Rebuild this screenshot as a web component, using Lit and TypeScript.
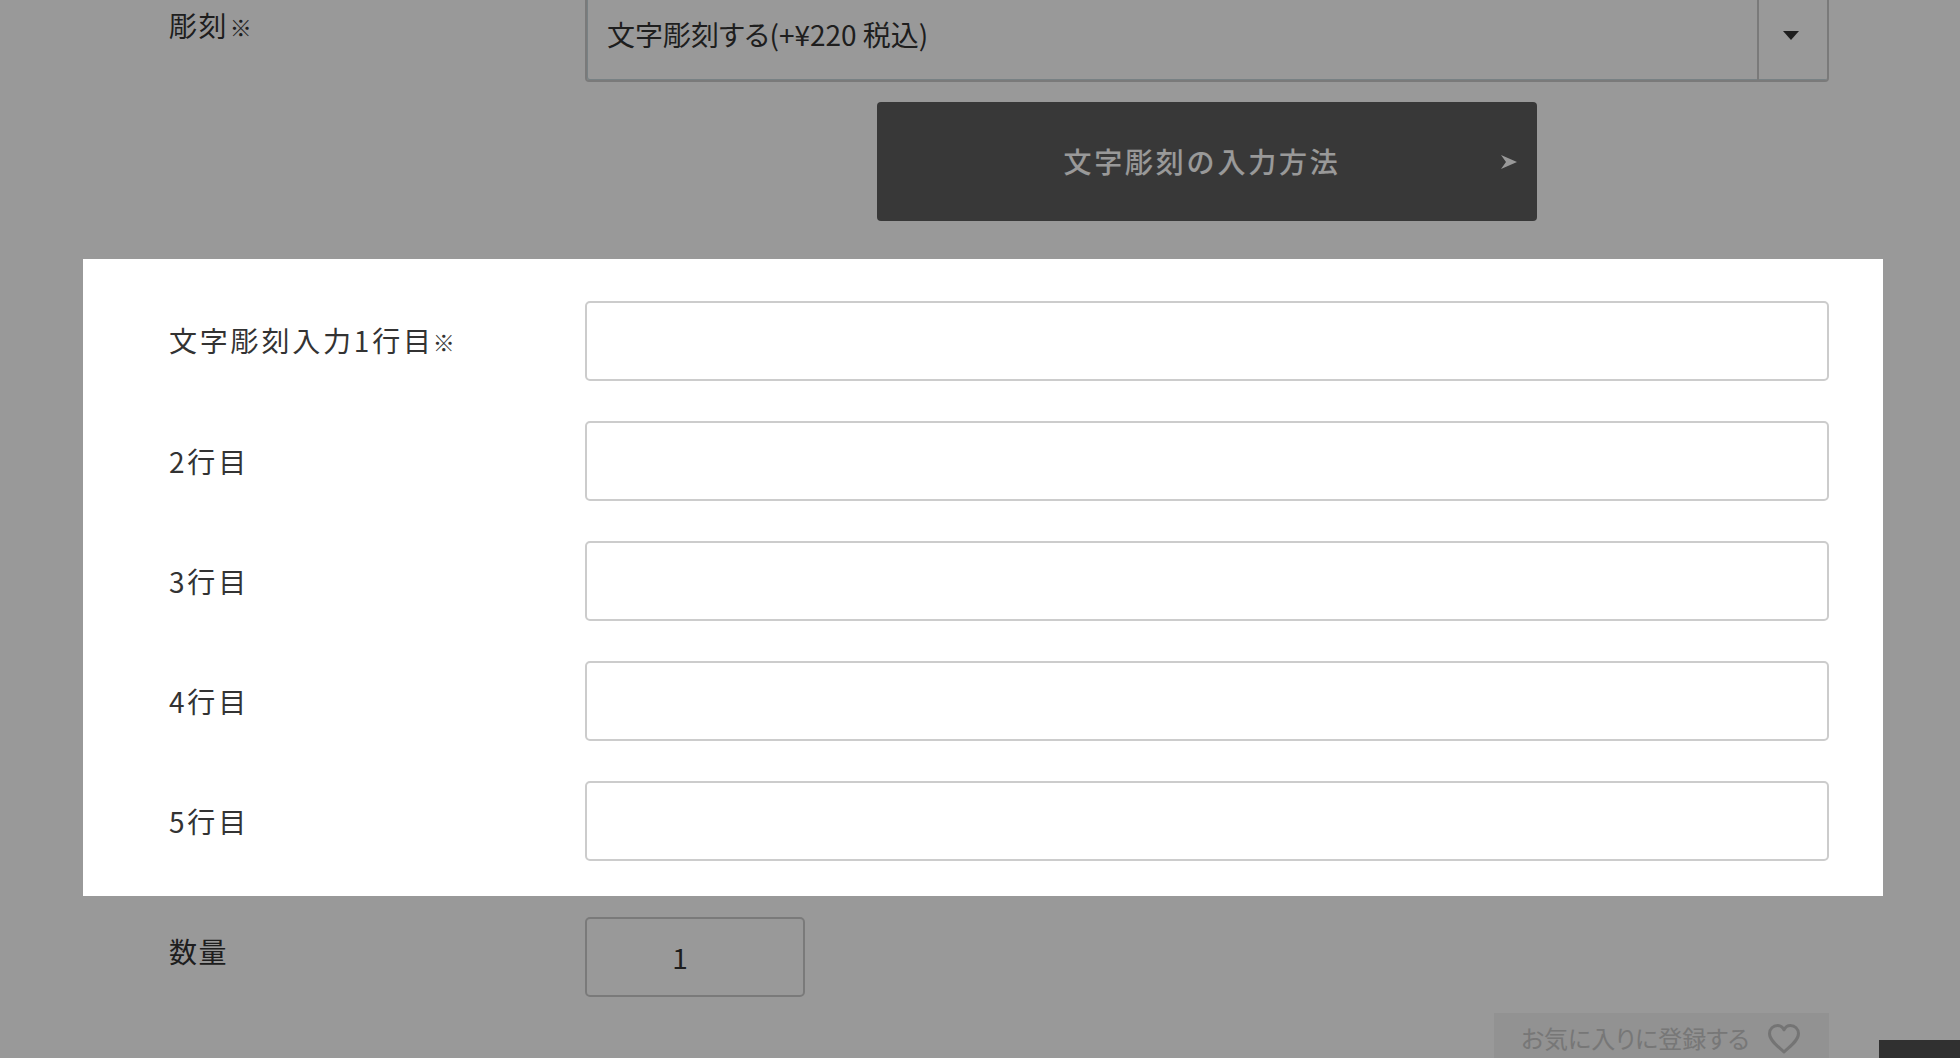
import { LitElement, html, css } from "lit";
import { customElement } from "lit/decorators.js";

@customElement("app-root")
export class AppRoot extends LitElement {
  static styles = css`
    :host {
      display: block;
      font-family: "Noto Sans CJK JP", "Noto Sans", sans-serif;
      color: #333;
    }
    * { box-sizing: border-box; }
    .page {
      position: relative;
      height: 1058px;
      overflow: hidden;
      background: #fff;
    }
    .overlay {
      position: absolute;
      inset: 0;
      z-index: 1;
      background: rgba(0, 0, 0, 0.4);
    }
    .content {
      width: 1800px;
      margin: -11px 0 0 83px;
    }
    .row {
      display: grid;
      grid-template-columns: 416px 1fr;
      padding: 0 54px 0 86px;
      align-items: start;
    }
    .label {
      font-size: 28px;
      line-height: 40px;
      letter-spacing: 1.4px;
    }
    .panel .label {
      letter-spacing: 2.8px;
      font-feature-settings: "palt";
      padding-bottom: 1px;
    }
    .note {
      font-size: 22px;
      letter-spacing: 0;
      margin-left: 2px;
      vertical-align: 1px;
    }
    .panel .note {
      margin-left: -1px;
    }
    .select {
      display: flex;
      height: 93px;
      border: 2px solid #ccc;
      border-radius: 4px;
      box-shadow: inset 1px -1px 0 #c8d8dc;
      font-size: 28px;
      font-feature-settings: "palt";
    }
    .select-text {
      flex: 1;
      display: flex;
      align-items: center;
      padding: 0 0 3px 20px;
    }
    .select-arrow {
      width: 70px;
      display: flex;
      align-items: center;
      justify-content: center;
      padding-right: 4px;
      border-left: 2px solid #ccc;
    }
    .engrave .label { padding-top: 16px; }
    .how {
      display: flex;
      justify-content: center;
      padding-top: 20px;
    }
    .how-btn {
      position: relative;
      width: 660px;
      height: 119px;
      display: flex;
      align-items: center;
      justify-content: center;
      background: #5e5e5e;
      border-radius: 4px;
      color: #fff;
      font-size: 28px;
      font-weight: 500;
      letter-spacing: 2.8px;
      padding: 0 10px 2px 0;
    }
    .how-btn svg {
      position: absolute;
      right: 20px;
      top: 53px;
    }
    .panel {
      position: relative;
      z-index: 2;
      margin-top: 38px;
      padding: 42px 0 35px;
      background: #fff;
      display: flex;
      flex-direction: column;
      gap: 40px;
    }
    .panel .row { align-items: center; }
    input {
      display: block;
      width: 100%;
      height: 80px;
      border: 2px solid #ccc;
      border-radius: 5px;
      background: #fff;
      font: inherit;
      font-size: 28px;
      color: #333;
      outline: none;
    }
    .qty { padding-top: 21px; }
    .qty .label { padding-top: 14px; }
    .qty input {
      width: 220px;
      text-align: center;
      padding: 0 30px 0 0;
    }
    .fav-wrap {
      display: flex;
      justify-content: flex-end;
      padding: 16px 54px 0 0;
    }
    .fav {
      width: 335px;
      height: 80px;
      display: flex;
      align-items: flex-start;
      padding: 9px 29px 0 27px;
      background: #f3f3f3;
      color: #c6c6c6;
      font-size: 24px;
      line-height: 32px;
      font-feature-settings: "palt";
    }
    .fav svg { flex: none; margin: 2px 0 0 auto; }
    .pagetop {
      position: absolute;
      right: 0;
      bottom: 0;
      width: 81px;
      height: 18px;
      background: #505050;
    }
  `;

  private lines = ["文字彫刻入力1行目", "2行目", "3行目", "4行目", "5行目"];

  render() {
    return html`
      <div class="page">
        <div class="content">
          <div class="row engrave">
            <div class="label">彫刻<span class="note">※</span></div>
            <div class="select">
              <div class="select-text">文字彫刻する(+¥220 税込)</div>
              <div class="select-arrow">
                <svg width="16" height="9" viewBox="0 0 16 9"><path d="M0 0H16L8 9Z" fill="#333" /></svg>
              </div>
            </div>
          </div>
          <div class="row">
            <div></div>
            <div class="how">
              <div class="how-btn">
                文字彫刻の入力方法
                <svg width="16" height="14" viewBox="0 0 16 14"><path d="M0 0L16 7L0 14L5 7Z" fill="#fff" /></svg>
              </div>
            </div>
          </div>
          <div class="panel">
            ${this.lines.map(
              (l, i) => html`
                <div class="row">
                  <div class="label">${l}${i === 0 ? html`<span class="note">※</span>` : ""}</div>
                  <input type="text" />
                </div>
              `
            )}
          </div>
          <div class="row qty">
            <div class="label">数量</div>
            <input type="text" value="1" />
          </div>
          <div class="fav-wrap">
            <div class="fav">
              お気に入りに登録する
              <svg width="32" height="30" viewBox="0 0 32 30">
                <path d="M16 28C11 23 1.500 17 1.500 9.500C1.500 4.800 5.300 1.500 9.500 1.500C12.500 1.500 14.800 3.300 16 5.800C17.200 3.300 19.500 1.500 22.500 1.500C26.700 1.500 30.500 4.800 30.500 9.500C30.500 17 21 23 16 28Z" fill="none" stroke="#c2c2c2" stroke-width="3" stroke-linejoin="round" />
              </svg>
            </div>
          </div>
        </div>
        <div class="pagetop"></div>
        <div class="overlay"></div>
      </div>
    `;
  }
}
